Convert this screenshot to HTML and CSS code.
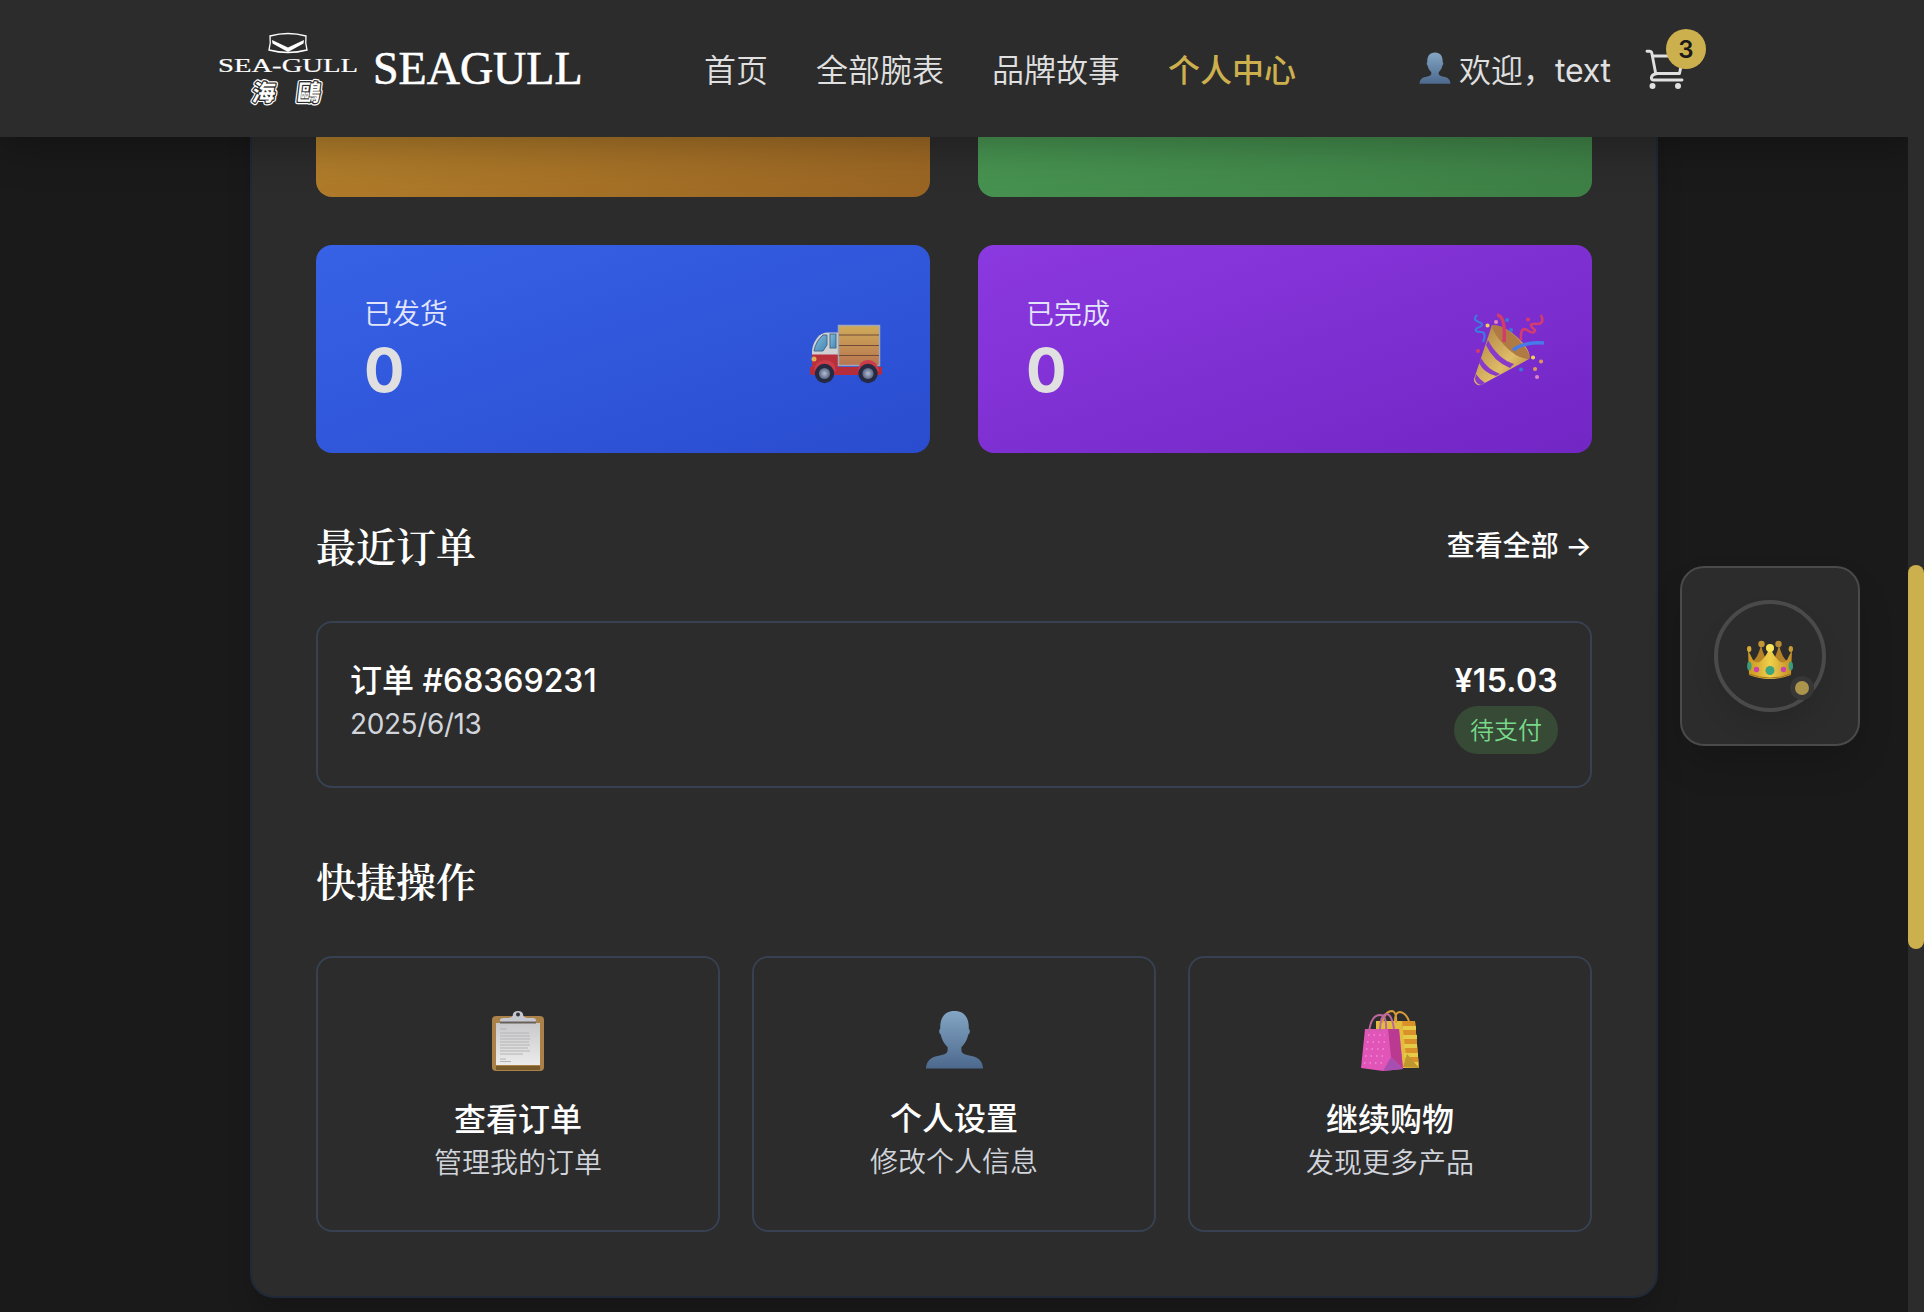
FILE: index.html
```html
<!DOCTYPE html>
<html lang="zh-CN">
<head>
<meta charset="utf-8">
<title>SEAGULL 个人中心</title>
<link rel="stylesheet" href="styles.css">
</head>
<body>
<svg class="defs" width="0" height="0">
  <defs>
    <linearGradient id="skin" x1="0" y1="0" x2="0" y2="1"><stop offset="0" stop-color="#84a5c4"/><stop offset="1" stop-color="#4c698d"/></linearGradient>
    <linearGradient id="wood" x1="0" y1="0" x2="0" y2="1"><stop offset="0" stop-color="#cfab59"/><stop offset="1" stop-color="#b87550"/></linearGradient>
    <linearGradient id="glass" x1="0" y1="0" x2="1" y2="1"><stop offset="0" stop-color="#86bddd"/><stop offset="1" stop-color="#4286b5"/></linearGradient>
    <linearGradient id="gold" x1="0" y1="0" x2="1" y2="0"><stop offset="0" stop-color="#c99520"/><stop offset=".5" stop-color="#f0cf4b"/><stop offset="1" stop-color="#c18d25"/></linearGradient>
    <linearGradient id="cone" x1="0" y1="0" x2="1" y2="1"><stop offset="0" stop-color="#a7793e"/><stop offset=".6" stop-color="#e0bd68"/><stop offset="1" stop-color="#a87b36"/></linearGradient>
    <linearGradient id="paper" x1="0" y1="0" x2="0" y2="1"><stop offset="0" stop-color="#c9c9cb"/><stop offset="1" stop-color="#ececec"/></linearGradient>
    <radialGradient id="hub"><stop offset="0" stop-color="#b4bdd4"/><stop offset="1" stop-color="#59647f"/></radialGradient>
    <symbol id="person" viewBox="0 0 60 60"><path d="M1 59.500C1.500 50 8 47.500 14 46.500C20 45.500 23 44 23 41V38C19 34 17 30 16 25C14 24 14 20 15.500 19C15 8 20 1 30 1S45 8 44.500 19C46 20 46 24 44 25C43 30 41 34 37 38V41C37 44 40 45.500 46 46.500C52 47.500 58.500 50 59 59.500Z" fill="url(#skin)"/></symbol>
    <g id="han" transform="translate(0 74) skewX(-7)"><text x="35.500" y="0">海</text><text x="80.500" y="0">鷗</text></g>
  </defs>
</svg>

<header class="header">
  <a class="brand">
    <svg class="logo" width="144" height="80" viewBox="0 0 144 80" fill="#fff">
      <path d="M54 9Q72 4 90 9Q89 16 91 23Q72 28 53 23Q55 16 54 9Z" fill="none" stroke="#fff" stroke-width="1.300"/>
      <path d="M56 13L72 20.500L88 13L87.500 16.500L72 25L56.500 16.500Z"/>
      <text class="logo-latin" x="2" y="44.500" textLength="140" lengthAdjust="spacingAndGlyphs">SEA-GULL</text>
      <g class="logo-han"><use href="#han" class="han-rim"/><use href="#han" class="han-gap"/><use href="#han"/></g>
    </svg>
    <span class="brand-name">SEAGULL</span>
  </a>
  <nav class="nav"><a>首页</a><a>全部腕表</a><a>品牌故事</a><a class="active">个人中心</a></nav>
  <div class="account">
    <svg class="avatar" width="32" height="32"><use href="#person"/></svg>
    <span class="welcome">欢迎，<span class="name">text</span></span>
  </div>
  <div class="cart">
    <svg width="40" height="40" viewBox="0 0 40 40" fill="none" stroke="#e0e0e0" stroke-width="2.900" stroke-linecap="round" stroke-linejoin="round"><path d="M2 2.300H4.500Q6.300 2.300 6.800 4L10.800 25M7.500 7H38L34.500 24.500H11C5 26.500 5.500 31 8.500 31H37"/><circle cx="7.500" cy="37" r="3" fill="#e0e0e0" stroke="none"/><circle cx="33" cy="37" r="3" fill="#e0e0e0" stroke="none"/></svg>
    <span class="cart-count">3</span>
  </div>
</header>

<main class="viewport">
  <section class="panel">
    <div class="stats">
      <div class="stat amber"></div>
      <div class="stat green"></div>
      <div class="stat blue">
        <div><p class="stat-label">已发货</p><p class="stat-value">0</p></div>
        <svg class="stat-icon" width="72" height="72" viewBox="0 0 72 72">
          <path d="M2 51V35Q2 28 7 21Q11 15.500 18 15.500H29V52H2Z" fill="#cfd0d3"/>
          <path d="M2 37.500H29V56H2Z" fill="#b92f3c"/>
          <path d="M4 34Q6 24 13 18H17V28L13 34Z" fill="url(#glass)" stroke="#446b86"/><rect x="20" y="17" width="6" height="14" fill="url(#glass)" stroke="#446b86"/>
          <rect x="28.500" y="8.500" width="41" height="40" fill="url(#wood)" stroke="#9fa7bc" stroke-width="1.500"/>
          <path d="M29 18H69M29 28.500H69M29 38.500H69" stroke="#714a38" stroke-width="1.200"/>
          <path d="M0 50H72V56Q72 58 69 58H3Q0 58 0 56Z" fill="#b62c3b"/>
          <path d="M4 54Q5 43 15 43T26 54M48 54Q49 43 58 43T69 54" fill="#cb3c49"/>
          <circle cx="4" cy="42" r="2.500" fill="#e2ad51"/>
          <circle cx="14.500" cy="56.500" r="9.700" fill="#252a42"/><circle cx="14.500" cy="56.500" r="5.600" fill="url(#hub)"/><circle cx="58" cy="56.500" r="9.700" fill="#252a42"/><circle cx="58" cy="56.500" r="5.600" fill="url(#hub)"/>
        </svg>
      </div>
      <div class="stat purple">
        <div><p class="stat-label">已完成</p><p class="stat-value">0</p></div>
        <svg class="stat-icon" width="72" height="72" viewBox="0 0 72 72" fill="none">
          <path d="M20 8Q32 8 45 20Q60 34 57 42L9 68Q4 69 2 64V62Z" fill="url(#cone)"/>
          <path d="M20 8Q34 8 48 24Q60 37 57 42Q45 42 32 28Q20 15 20 8Z" fill="#b07a45"/>
          <path d="M16 23Q26 42 42 47L38 51Q21 44 14 28ZM9 41Q15 52 28 57L24 59Q12 56 7 46ZM4 57Q8 63 13 66L9 68Q4 67 3 62Z" fill="#893ac9"/>
          <path d="M25-2Q34-1 32 25" stroke="#d23c68" stroke-width="3.500"/>
          <path d="M41 33Q54 24 72 26" stroke="#477be8" stroke-width="3.500"/>
          <path d="M49 23Q48 9 55 13Q62 18 63 13Q54 6 65 7Q73 7 69-2" stroke="#d43c6d" stroke-width="2.600"/>
          <path d="M5-2Q0 3 7 5Q14 8 5 11Q1 15 9 15Q15 15 11 25" stroke="#397de0" stroke-width="2"/>
          <g stroke-width="4" stroke-linecap="round"><path d="M15.500 8.500h.1M61 40.500h.1" stroke="#f0d25b"/><path d="M24 5h.1M65 60h.1" stroke="#e284bd"/><path d="M35 3h.1M39 13h.1M49 52.500h.1" stroke="#387bd8"/><path d="M6 34h.1M56 2.500h.1" stroke="#d83b69"/><path d="M69 44.500h.1M63 52h.1" stroke="#df9757"/></g>
        </svg>
      </div>
    </div>

    <div class="section-head"><h2>最近订单</h2><a class="more">查看全部 <span class="arrow">→</span></a></div>
    <article class="order">
      <div><p class="strong">订单 #68369231</p><p class="muted date">2025/6/13</p></div>
      <div class="order-side"><p class="strong price">¥15.03</p><span class="status">待支付</span></div>
    </article>

    <div class="section-head"><h2>快捷操作</h2></div>
    <div class="actions">
      <a class="action">
        <svg width="60" height="72" viewBox="0 0 60 72"><rect x="4" y="10" width="52" height="55" rx="4" fill="#aa8148"/><path d="M8 60H52V64H8Z" fill="#795a2b"/><rect x="8" y="17" width="44" height="42" fill="url(#paper)"/><path d="M12 23H19M12 27H41M12 30H42M12 33H42M12 36H41M12 39H42M12 42H40M12 45H42M12 48H35M12 53H18M12 55.500H23" stroke="#b4b4b6" stroke-width="1"/><path d="M12 16V14Q12 12 16 12H20Q25 12 25 8Q26 5 30 5T35 8Q35 12 40 12H45Q48 12 48 15V16Z" fill="#c5c9cf"/><path d="M12 15.500H48V17.500H12Z" fill="#68605a"/><circle cx="30" cy="8.500" r="2" fill="#30353a"/></svg>
        <p class="strong">查看订单</p><p class="muted">管理我的订单</p>
      </a>
      <a class="action">
        <span class="person-box"><svg width="59" height="59"><use href="#person"/></svg></span>
        <p class="strong">个人设置</p><p class="muted">修改个人信息</p>
      </a>
      <a class="action">
        <svg width="60" height="72" viewBox="0 0 60 72" fill="none"><path d="M16 15H55L59 62H40V63H16Z" fill="#e2bd3d"/><path d="M42 15H55L59 62L46 50Z" fill="#db9129"/><path d="M43 22H56M43 31H57M44 40H57M44 49H58M44 58H58" stroke="#e6cb48" stroke-width="4"/><path d="M43 61L47 48L59 62Z" fill="#c0962f"/><path d="M22 17Q25 5 32 5Q37 6 36 17M35 15Q35 6 40 6Q46 7 49 15" stroke="#d99c38" stroke-width="2"/><path d="M5 23H39L43 63L23 65L1 62Z" fill="#e155b8"/><path d="M28 23H39L43 63L31 51Z" fill="#ba3a92"/><path d="M23 65L31 51L43 63Z" fill="#a74eb1"/><path d="M8 29H25M7 36H25M6 43H24M5 50H23M4 57H22" stroke="#ee8fd5" stroke-width="1.500" stroke-dasharray="1.500 4"/><path d="M9 26Q11 9 20 9Q27 9 26 24M20 26Q20 8 27 8Q32 9 34 23" stroke="#bc689f" stroke-width="2"/></svg>
        <p class="strong">继续购物</p><p class="muted">发现更多产品</p>
      </a>
    </div>
  </section>
</main>

<aside class="vip">
  <div class="ring">
    <svg width="46" height="40" viewBox="0 0 46 40"><path d="M5 22Q11 18 14 5Q17 18 23 25Q29 18 32 5Q35 18 41 22L30 32H16Z" fill="#b58227"/><path d="M1 10L6 20Q10 25 15 20Q20 15 23 7Q26 15 31 20Q36 25 40 20L45 10L44 35Q23 43 2 35Z" fill="url(#gold)"/><circle cx="14.500" cy="4" r="3.200" fill="#c49534"/><circle cx="31.500" cy="4" r="3.200" fill="#b88c34"/><circle cx="23" cy="8" r="4" fill="#fce45a"/><ellipse cx="2.200" cy="9" rx="2.200" ry="3" fill="#d8a939"/><ellipse cx="43.800" cy="9" rx="2.200" ry="3" fill="#c89a34"/><path d="M2 34Q23 42 44 34" fill="none" stroke="#a47620"/><circle cx="23" cy="30.500" r="4.500" fill="#3aa57f"/><circle cx="9.500" cy="29.500" r="2.700" fill="#cc45a6"/><circle cx="36.500" cy="29.500" r="2.700" fill="#cc45a6"/><ellipse cx="2.300" cy="26" rx="2.200" ry="4.300" fill="#3a9c79"/><ellipse cx="43.800" cy="26" rx="2.200" ry="4.300" fill="#3a9c79"/></svg>
    <i class="dot"></i>
  </div>
</aside>
<div class="scrollbar"><div class="thumb"></div></div>
</body>
</html>
```
FILE: styles.css
```css
* { box-sizing: border-box; }
body {
  margin: 0;
  height: 1312px;
  overflow: hidden;
  position: relative;
  background: #1a1a1a;
  color: #e0e0e0;
  font: 350 32px/48px Inter, "Noto Sans CJK SC", sans-serif;
}
p, h2 { margin: 0; }
svg { display: block; flex: none; }
.defs { position: absolute; }

.header {
  position: relative;
  z-index: 2;
  display: flex;
  align-items: center;
  height: 137px;
  padding: 0 0 0 216px;
  background: #2c2c2c;
  box-shadow: 0 8px 40px rgba(0, 0, 0, .3);
  white-space: nowrap;
}
.brand { display: flex; align-items: center; gap: 13px; width: 488px; }
.logo { margin-top: -3px; overflow: visible; }
.logo-latin { font: 18.500px "Liberation Serif", serif; stroke: #fff; stroke-width: .2px; }
.logo-han { font: 700 23px "Noto Sans CJK TC", sans-serif; fill: #fff; stroke-linejoin: round; }
.han-rim { stroke: #fff; stroke-width: 5px; }
.han-gap { stroke: #2c2c2c; stroke-width: 2.600px; }
.brand-name { font: 46px/60px "Liberation Serif", serif; color: #fff; -webkit-text-stroke: .6px #fff; }
.nav { display: flex; gap: 48px; width: 715px; padding-top: 4px; }
.active { color: #cdb04e; font-weight: 500; }
.account { display: flex; align-items: center; gap: 8px; width: 226px; }
.welcome { padding-top: 4px; }
.name { font-weight: 400; letter-spacing: -.2px; }
.avatar { margin-top: -1px; }
.cart { position: relative; }
.cart-count {
  position: absolute;
  left: 21px;
  top: -20px;
  width: 40px;
  height: 40px;
  border-radius: 50%;
  background: #cdb04e;
  color: #1a1a1a;
  font-size: 24px;
  font-weight: 600;
  line-height: 41px;
  text-align: center;
}

.viewport { height: 1175px; padding-left: 250px; overflow: hidden; }
.panel {
  width: 1408px;
  margin-top: -214px;
  padding: 64px;
  border: 2px solid #1f2937;
  border-radius: 24px;
  background: #2c2c2c;
  box-shadow: 0 20px 30px -6px rgba(0, 0, 0, .2);
}
.stats { display: grid; grid-template-columns: 1fr 1fr; gap: 48px; margin-bottom: 64px; }
.stat { display: flex; align-items: center; justify-content: space-between; height: 208px; padding: 49px 48px 47px; border-radius: 16px; }
.stat-icon { margin-top: 5px; overflow: visible; }
.amber { background: linear-gradient(to bottom right, #c39030, #996423); }
.green { background: linear-gradient(to bottom right, #4fa35a, #3d7f45); }
.blue { background: linear-gradient(to bottom right, #3762e6, #2a4ccf); }
.purple { background: linear-gradient(to bottom right, #8b39e0, #7226c4); }
.stat-label { font-size: 28px; line-height: 40px; color: #e3e5fc; }
.stat-value { font-size: 60px; line-height: 72px; font-weight: 700; letter-spacing: -.5px; }

.section-head { display: flex; align-items: center; justify-content: space-between; height: 56px; margin-bottom: 48px; color: #fff; }
h2 { font: 600 40px/56px "Noto Serif CJK SC", "Noto Serif SC", "Noto Sans CJK SC", serif; }
.more { padding-top: 1px; font-size: 28px; font-weight: 500; word-spacing: -1px; }
.strong { color: #fff; font-weight: 500; line-height: 48px; }
.muted { color: #d1d5db; font-size: 28px; line-height: 40px; }
.date { font-weight: 400; letter-spacing: -.4px; }
.order { display: flex; justify-content: space-between; height: 167px; margin-bottom: 64px; padding: 34px 32px 30px; border: 2px solid #374151; border-radius: 16px; }
.order-side { display: flex; flex-direction: column; align-items: flex-end; gap: 1px; }
.date { margin-top: -1px; }
.price { font-weight: 600; letter-spacing: .3px; }
.status { height: 48px; padding: 0 16px; border-radius: 24px; background: #364a36; color: #79d98a; font-size: 24px; line-height: 49px; }
.actions { display: grid; grid-template-columns: repeat(3, 1fr); gap: 32px; }
.action { display: flex; flex-direction: column; align-items: center; height: 276px; padding: 48px 0; border: 2px solid #374151; border-radius: 16px; }
.action > svg, .person-box { margin-bottom: 18px; }
.action .muted { margin-top: -1px; }
.person-box { height: 72px; padding-top: 4px; }

.vip {
  position: absolute;
  z-index: 1;
  left: 1680px;
  top: 566px;
  display: grid;
  place-items: center;
  width: 180px;
  height: 180px;
  border: 2px solid #4a4a4a;
  border-radius: 24px;
  background: #2c2c2c;
  box-shadow: 0 20px 40px -8px rgba(0, 0, 0, .2);
}
.ring { position: relative; display: grid; place-items: center; width: 112px; height: 112px; padding-top: 7px; border: 4px solid #4a4a4a; border-radius: 50%; box-shadow: 0 16px 28px -4px rgba(0, 0, 0, .12); }
.dot { position: absolute; left: 72px; top: 72px; width: 24px; height: 24px; border: 5px solid #373737; border-radius: 50%; background: #ab944b; }
.scrollbar { position: absolute; z-index: 3; right: 0; top: 137px; width: 16px; height: 1175px; padding-top: 428px; background: #2c2c2c; }
.thumb { height: 384px; border-radius: 8px; background: #cdb04e; }
```
